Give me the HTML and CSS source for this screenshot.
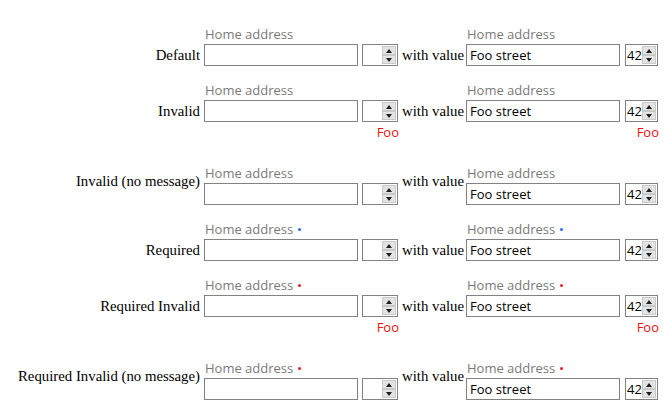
FILE: index.html
```html
<!DOCTYPE html>
<html>
<head>
<meta charset="utf-8">
<link rel="stylesheet" href="styles.css">
</head>
<body>
<div class="page">

  <div class="row">
    <div class="caption">Default</div>
    <div class="field"><div class="flabel">Home address</div><input class="text" type="text" value=""></div>
    <div class="numfield"><div class="num wide"><span class="numval"></span><span class="spin"><span class="sb up"></span><span class="sb down"></span></span></div></div>
    <div class="with">with value</div>
    <div class="field"><div class="flabel">Home address</div><input class="text" type="text" value="Foo street"></div>
    <div class="numfield"><div class="num narrow"><span class="numval">42</span><span class="spin"><span class="sb up"></span><span class="sb down"></span></span></div></div>
  </div>

  <div class="row has-error">
    <div class="caption">Invalid</div>
    <div class="field"><div class="flabel">Home address</div><input class="text" type="text" value=""></div>
    <div class="numfield"><div class="num wide"><span class="numval"></span><span class="spin"><span class="sb up"></span><span class="sb down"></span></span></div><div class="error">Foo</div></div>
    <div class="with">with value</div>
    <div class="field"><div class="flabel">Home address</div><input class="text" type="text" value="Foo street"></div>
    <div class="numfield"><div class="num narrow"><span class="numval">42</span><span class="spin"><span class="sb up"></span><span class="sb down"></span></span></div><div class="error">Foo</div></div>
  </div>

  <div class="row nomsg">
    <div class="caption">Invalid (no message)</div>
    <div class="field"><div class="flabel">Home address</div><input class="text" type="text" value=""></div>
    <div class="numfield"><div class="num wide"><span class="numval"></span><span class="spin"><span class="sb up"></span><span class="sb down"></span></span></div></div>
    <div class="with">with value</div>
    <div class="field"><div class="flabel">Home address</div><input class="text" type="text" value="Foo street"></div>
    <div class="numfield"><div class="num narrow"><span class="numval">42</span><span class="spin"><span class="sb up"></span><span class="sb down"></span></span></div></div>
  </div>

  <div class="row">
    <div class="caption">Required</div>
    <div class="field"><div class="flabel">Home address<span class="dot blue"></span></div><input class="text" type="text" value=""></div>
    <div class="numfield"><div class="num wide"><span class="numval"></span><span class="spin"><span class="sb up"></span><span class="sb down"></span></span></div></div>
    <div class="with">with value</div>
    <div class="field"><div class="flabel">Home address<span class="dot blue"></span></div><input class="text" type="text" value="Foo street"></div>
    <div class="numfield"><div class="num narrow"><span class="numval">42</span><span class="spin"><span class="sb up"></span><span class="sb down"></span></span></div></div>
  </div>

  <div class="row has-error">
    <div class="caption">Required Invalid</div>
    <div class="field"><div class="flabel">Home address<span class="dot red"></span></div><input class="text" type="text" value=""></div>
    <div class="numfield"><div class="num wide"><span class="numval"></span><span class="spin"><span class="sb up"></span><span class="sb down"></span></span></div><div class="error">Foo</div></div>
    <div class="with">with value</div>
    <div class="field"><div class="flabel">Home address<span class="dot red"></span></div><input class="text" type="text" value="Foo street"></div>
    <div class="numfield"><div class="num narrow"><span class="numval">42</span><span class="spin"><span class="sb up"></span><span class="sb down"></span></span></div><div class="error">Foo</div></div>
  </div>

  <div class="row nomsg">
    <div class="caption">Required Invalid (no message)</div>
    <div class="field"><div class="flabel">Home address<span class="dot red"></span></div><input class="text" type="text" value=""></div>
    <div class="numfield"><div class="num wide"><span class="numval"></span><span class="spin"><span class="sb up"></span><span class="sb down"></span></span></div></div>
    <div class="with">with value</div>
    <div class="field"><div class="flabel">Home address<span class="dot red"></span></div><input class="text" type="text" value="Foo street"></div>
    <div class="numfield"><div class="num narrow"><span class="numval">42</span><span class="spin"><span class="sb up"></span><span class="sb down"></span></span></div></div>
  </div>

</div>
</body>
</html>
```
FILE: styles.css
```css
html, body {
  margin: 0;
  padding: 0;
  background: #ffffff;
}

.page {
  padding-top: 26px;
  display: flex;
  flex-direction: column;
  font-family: "Liberation Serif", "Times New Roman", serif;
  font-size: 14.8px;
  color: #000;
}

.row {
  display: flex;
  align-items: flex-start;
  margin-bottom: 16px;
}

.row.has-error {
  margin-bottom: 24px;
}

.caption {
  width: 200px;
  margin-right: 4px;
  text-align: right;
  margin-top: 18px;
  line-height: 22px;
  white-space: nowrap;
}

.with {
  width: 64px;
  margin-left: 4px;
  margin-top: 18px;
  line-height: 22px;
  white-space: nowrap;
}

.nomsg .caption,
.nomsg .with {
  margin-top: 5px;
}

.field {
  display: flex;
  flex-direction: column;
  width: 154px;
}

.flabel {
  height: 18px;
  line-height: 17px;
  padding-left: 1px;
  font-family: "Open Sans", "Noto Sans", sans-serif;
  font-size: 13px;
  color: #7a7a7a;
  white-space: nowrap;
}

.dot {
  display: inline-block;
  width: 3px;
  height: 3px;
  border-radius: 50%;
  margin-left: 5px;
  vertical-align: 3px;
}

.dot.blue { background: #2a6be0; }
.dot.red { background: #e8202a; }

.text {
  box-sizing: border-box;
  width: 154px;
  height: 22px;
  margin: 0;
  border: 1px solid #828282;
  padding: 0 3px;
  font-family: "Open Sans", "Noto Sans", sans-serif;
  font-size: 13px;
  color: #000;
  background: #fff;
  outline: none;
}

.numfield {
  display: flex;
  flex-direction: column;
  margin-top: 18px;
  margin-left: 4px;
}

.num {
  box-sizing: border-box;
  height: 22px;
  border: 1px solid #828282;
  display: flex;
  align-items: stretch;
  justify-content: flex-end;
  background: #fff;
}

.num.wide { width: 36px; }
.num.narrow { width: 33px; margin-left: 1px; }

.numval {
  flex: 1;
  padding-left: 1px;
  font-family: "Open Sans", "Noto Sans", sans-serif;
  font-size: 13px;
  line-height: 20px;
  color: #000;
}

.spin {
  width: 14px;
  margin: 1px 1px 1px 0;
  display: flex;
  flex-direction: column;
  background: #e6e6e6;
}

.sb {
  flex: 1;
  box-sizing: border-box;
  border: 1px solid #c9c9c9;
  background: #e3e3e3;
  display: flex;
  align-items: center;
  justify-content: center;
}

.sb.up::after {
  content: "";
  width: 0;
  height: 0;
  border-left: 3px solid transparent;
  border-right: 3px solid transparent;
  border-bottom: 4px solid #1e1e1e;
}

.sb.down::after {
  content: "";
  width: 0;
  height: 0;
  border-left: 3px solid transparent;
  border-right: 3px solid transparent;
  border-top: 4px solid #1e1e1e;
}

.error {
  height: 18px;
  line-height: 18px;
  margin-top: 1px;
  text-align: right;
  margin-right: -1px;
  font-family: "Open Sans", "Noto Sans", sans-serif;
  font-size: 13px;
  color: #ee1111;
  white-space: nowrap;
}
```
